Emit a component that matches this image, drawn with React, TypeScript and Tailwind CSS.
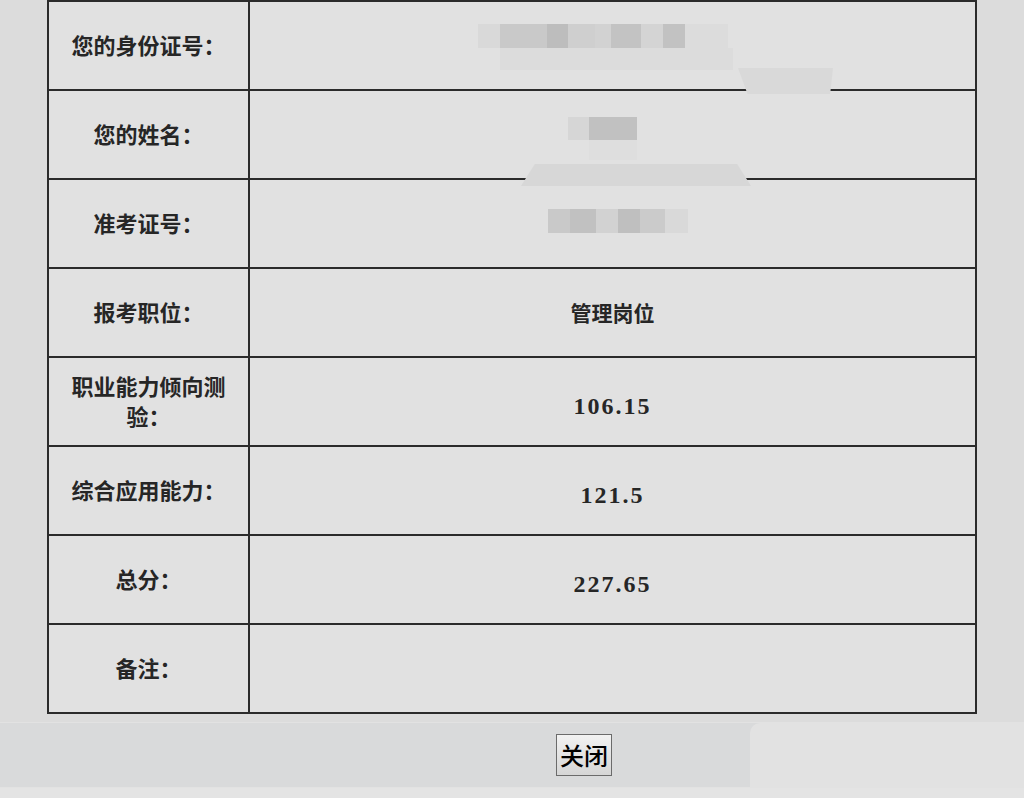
import React from "react";

const cn = "font-['Noto_Sans_CJK_SC','Noto_Sans',sans-serif]";

type Block = { w: string; c: string };

// pixelated redaction blocks, left to right
const idBlocks: Block[] = [
  { w: "w-[22px]", c: "bg-[#d9d9d9]" },
  { w: "w-[47px]", c: "bg-[#c9c9c9]" },
  { w: "w-[21px]", c: "bg-[#bdbdbd]" },
  { w: "w-[27px]", c: "bg-[#cfcfcf]" },
  { w: "w-[16px]", c: "bg-[#d2d2d2]" },
  { w: "w-[30px]", c: "bg-[#c3c3c3]" },
  { w: "w-[22px]", c: "bg-[#d4d4d4]" },
  { w: "w-[22px]", c: "bg-[#c2c2c2]" },
  { w: "w-[43px]", c: "bg-[#dcdcdc]" },
];

const ticketBlocks: Block[] = [
  { w: "w-[22px]", c: "bg-[#c9c9c9]" },
  { w: "w-[26px]", c: "bg-[#c1c1c1]" },
  { w: "w-[22px]", c: "bg-[#d2d2d2]" },
  { w: "w-[22px]", c: "bg-[#bfbfbf]" },
  { w: "w-[25px]", c: "bg-[#cbcbcb]" },
  { w: "w-[23px]", c: "bg-[#d9d9d9]" },
];

function Blocks({ items }: { items: Block[] }) {
  return (
    <div className="flex h-[24px]">
      {items.map((b, i) => (
        <div key={i} className={`${b.w} ${b.c} h-full`} />
      ))}
    </div>
  );
}

function Row({
  label,
  children,
  extra,
}: {
  label: React.ReactNode;
  children?: React.ReactNode;
  extra?: React.ReactNode;
}) {
  return (
    <div className="flex h-[89px] border-b-2 border-[#2b2b2b]">
      <div className="w-[201px] shrink-0 border-r-2 border-[#2b2b2b] flex items-center justify-center px-4 text-center">
        <span className={`${cn} text-[22px] leading-[30px] font-bold text-[#262626] -mt-[4px]`}>
          {label}
        </span>
      </div>
      <div className="relative flex-1 flex items-center justify-center">
        {children}
        {extra}
      </div>
    </div>
  );
}

function Num({ v }: { v: string }) {
  return (
    <span className="font-['Liberation_Serif',serif] text-[24px] font-bold tracking-[2px] text-[#262626] mt-[8px]">
      {v}
    </span>
  );
}

export default function App() {
  return (
    <div className="w-[1024px] h-[798px] bg-[#dcdcdc] overflow-hidden flex flex-col">
      <div className="px-[47px]">
        <div className="border-x-2 border-t-2 border-[#2b2b2b] bg-[#e1e1e1]">
          <Row
            label="您的身份证号："
            extra={
              <div className="absolute left-[488px] top-[66px] w-[95px] h-[26px] bg-[#d9d9d9] [clip-path:polygon(0_0,100%_0,97%_100%,10%_100%)] z-10" />
            }
          >
            <div className="flex flex-col -ml-[15px] mt-[2px]">
              <Blocks items={idBlocks} />
              <div className="ml-[22px] w-[233px] h-[22px] bg-[#dcdcdc]" />
            </div>
          </Row>
          <Row
            label="您的姓名："
            extra={
              <div className="absolute left-[271px] top-[73px] w-[230px] h-[22px] bg-[#d7d7d7] [clip-path:polygon(6%_0,94%_0,100%_100%,0_100%)] z-10" />
            }
          >
            <div className="flex flex-col -ml-[20px] mt-[8px]">
              <div className="flex h-[23px]">
                <div className="w-[21px] bg-[#d6d6d6]" />
                <div className="w-[48px] bg-[#c1c1c1]" />
              </div>
              <div className="ml-[21px] w-[48px] h-[20px] bg-[#dedede]" />
            </div>
          </Row>
          <Row label="准考证号：">
            <div className="ml-[10px] -mt-[5px]">
              <Blocks items={ticketBlocks} />
            </div>
          </Row>
          <Row label="报考职位：">
            <span className={`${cn} text-[21px] font-bold text-[#262626]`}>管理岗位</span>
          </Row>
          <Row label="职业能力倾向测验：">
            <Num v="106.15" />
          </Row>
          <Row label="综合应用能力：">
            <Num v="121.5" />
          </Row>
          <Row label="总分：">
            <Num v="227.65" />
          </Row>
          <Row label="备注：" />
        </div>
      </div>

      <div className="mt-[8px] h-[66px] bg-[#d9dadb] border-y border-[#e2e2e2] flex items-center justify-center pl-[144px] relative">
        <div className="absolute left-[750px] top-0 right-0 h-full bg-[#e2e2e2] rounded-tl-[10px]" />
        <button
          className={`${cn} relative h-[42px] px-[3px] border border-[#6b6b6b] bg-gradient-to-b from-[#f2f2f2] to-[#d6d6d6] text-[24px] leading-none font-medium text-black`}
        >
          关闭
        </button>
      </div>
      <div className="flex-1 bg-[#e4e4e4]" />
    </div>
  );
}
